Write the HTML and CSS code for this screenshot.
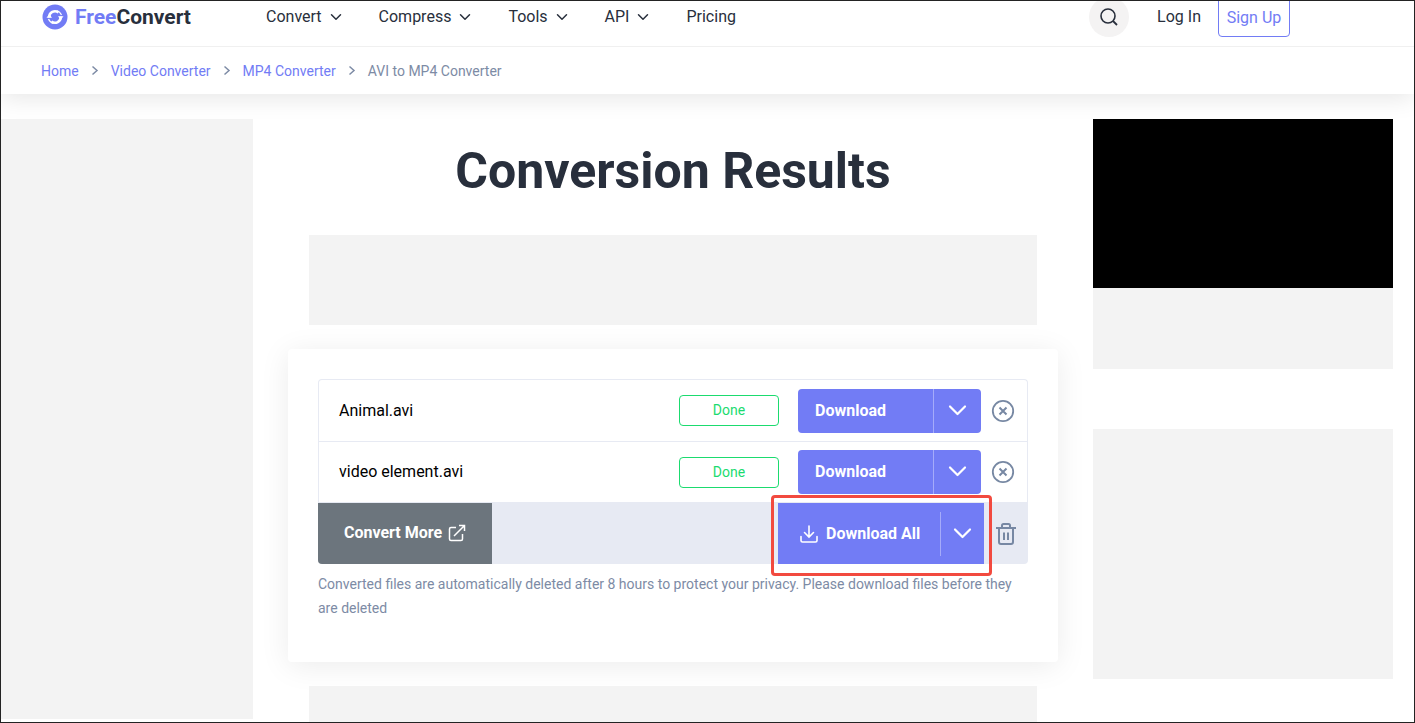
FILE: index.html
```html
<!DOCTYPE html>
<html lang="en">
<head>
  <meta charset="UTF-8">
  <meta name="viewport" content="width=device-width, initial-scale=1.0">
  <title>Conversion Results - FreeConvert</title>
  <link rel="stylesheet" href="styles.css">
</head>
<body>
<svg class="sprite" width="0" height="0" aria-hidden="true">
  <symbol id="chevron" viewBox="0 0 12 8"><path d="M1.5 1.8 L6 6.300 L10.500 1.8" fill="none" stroke="currentColor" stroke-width="1.5" stroke-linecap="round" stroke-linejoin="round"/></symbol>
  <symbol id="chevron-big" viewBox="0 0 20 12"><path d="M2 2.500 L9.500 10 L17 2.500" fill="none" stroke="currentColor" stroke-width="2.2" stroke-linecap="round" stroke-linejoin="round"/></symbol>
  <symbol id="crumb" viewBox="0 0 8 12"><path d="M1.5 1.5 L6 5.500 L1.5 9.500" fill="none" stroke="currentColor" stroke-width="1.5"/></symbol>
  <symbol id="remove" viewBox="0 0 24 24"><circle cx="12" cy="12" r="10.2" fill="none" stroke="currentColor" stroke-width="1.8"/><path d="M8.5 8.5 L15.5 15.5 M15.5 8.5 L8.5 15.5" stroke="currentColor" stroke-width="2"/></symbol>
</svg>

<header class="header">
  <a class="logo" href="#">
    <svg width="26" height="26" viewBox="0 0 26 26" aria-hidden="true">
      <circle cx="13" cy="13" r="12.5" fill="#727cf5"/>
      <path d="M7.300 13.500 A5.700 5.700 0 0 1 16.500 8.500 M18.700 12.500 A5.700 5.700 0 0 1 9.500 17.500" fill="none" stroke="#fff" stroke-width="2.5"/>
      <path d="M4.500 13.800 L7.300 10 L10 13.800 Z M21.500 12.200 L18.700 16 L16 12.200 Z" fill="#fff"/>
      <path d="M14.500 6.500 Q18 7.500 19.500 11 M11.500 19.500 Q8 18.500 6.500 15" fill="none" stroke="#fff" stroke-width="1.2"/>
    </svg>
    <span class="logo-text"><span class="logo-free">Free</span>Convert</span>
  </a>
  <nav class="nav">
    <a href="#">Convert <svg width="12" height="8"><use href="#chevron"/></svg></a>
    <a href="#">Compress <svg width="12" height="8"><use href="#chevron"/></svg></a>
    <a href="#">Tools <svg width="12" height="8"><use href="#chevron"/></svg></a>
    <a href="#">API <svg width="12" height="8"><use href="#chevron"/></svg></a>
    <a href="#">Pricing</a>
  </nav>
  <div class="account">
    <button class="search" aria-label="Search">
      <svg width="20" height="20" viewBox="0 0 20 20"><circle cx="9" cy="9" r="7" fill="none" stroke="#282f3c" stroke-width="1.6"/><path d="M14 14 L18 18" stroke="#282f3c" stroke-width="1.8"/></svg>
    </button>
    <a class="login" href="#">Log In</a>
    <a class="signup" href="#">Sign Up</a>
  </div>
</header>

<nav class="breadcrumb" aria-label="Breadcrumb">
  <a href="#">Home</a>
  <svg width="8" height="12"><use href="#crumb"/></svg>
  <a href="#">Video Converter</a>
  <svg width="8" height="12"><use href="#crumb"/></svg>
  <a href="#">MP4 Converter</a>
  <svg width="8" height="12"><use href="#crumb"/></svg>
  <span>AVI to MP4 Converter</span>
</nav>

<div class="layout">
  <aside class="ad ad-left"></aside>

  <main class="content">
    <h1>Conversion Results</h1>
    <div class="ad ad-banner"></div>

    <section class="card">
      <ul class="files">
        <li class="file">
          <span class="file-name">Animal.avi</span>
          <span class="status">Done</span>
          <div class="download">
            <button class="download-main">Download</button>
            <button class="download-more" aria-label="Download options"><svg width="20" height="12"><use href="#chevron-big"/></svg></button>
          </div>
          <button class="icon-button" aria-label="Remove"><svg width="24" height="24"><use href="#remove"/></svg></button>
        </li>
        <li class="file">
          <span class="file-name">video element.avi</span>
          <span class="status">Done</span>
          <div class="download">
            <button class="download-main">Download</button>
            <button class="download-more" aria-label="Download options"><svg width="20" height="12"><use href="#chevron-big"/></svg></button>
          </div>
          <button class="icon-button" aria-label="Remove"><svg width="24" height="24"><use href="#remove"/></svg></button>
        </li>
      </ul>
      <div class="actions">
        <button class="convert-more">Convert More
          <svg width="18" height="18" viewBox="0 0 18 18" fill="none" stroke="#fff" stroke-width="1.5"><path d="M8 3.500 H3 Q1.500 3.500 1.500 5 V15 Q1.500 16.500 3 16.500 H13 Q14.500 16.500 14.500 15 V10 M6 12 L16.500 1.500 M11 1.500 H16.500 V7"/></svg>
        </button>
        <div class="download-all">
          <button class="download-all-main">
            <svg width="18" height="18" viewBox="0 0 18 18" fill="none" stroke="#fff" stroke-width="1.6" stroke-linecap="round"><path d="M9 1 V11.500 M4.500 7.500 L9 12 L13.500 7.500 M1 11.500 V15.500 Q1 17 2.500 17 H15.500 Q17 17 17 15.500 V11.500"/></svg>
            Download All
          </button>
          <button class="download-all-more" aria-label="Download all options"><svg width="20" height="12"><use href="#chevron-big"/></svg></button>
        </div>
        <button class="icon-button" aria-label="Delete all">
          <svg width="20" height="24" viewBox="0 0 20 24" fill="none" stroke="currentColor" stroke-width="2"><path d="M0 6 H20 M6 6 V3.500 Q6 2 7.500 2 H12.500 Q14 2 14 3.500 V6 M3 6 V20 Q3 22 5 22 H15 Q17 22 17 20 V6 M8 10.500 V18 M12 10.500 V18"/></svg>
        </button>
      </div>
      <p class="note">Converted files are automatically deleted after 8 hours to protect your privacy. Please download files before they are deleted</p>
    </section>

    <div class="ad ad-banner"></div>
  </main>

  <aside class="sidebar">
    <div class="ad ad-video"><div class="video"></div></div>
    <div class="ad ad-box"></div>
  </aside>
</div>
</body>
</html>
```
FILE: styles.css
```css
* {
  box-sizing: border-box;
}

body {
  margin: 0;
  height: 100vh;
  overflow: hidden;
  border: 1px solid #232323;
  background: #fff;
  color: #282f3c;
  font: 16px/24px Roboto, "Liberation Sans", sans-serif;
}

a {
  color: inherit;
  text-decoration: none;
}

button {
  padding: 0;
  border: 0;
  background: none;
  color: inherit;
  font: inherit;
  cursor: pointer;
}

.sprite {
  position: absolute;
}

/* header */
.header {
  position: relative;
  z-index: 1;
  display: flex;
  align-items: center;
  height: 46px;
  padding: 0 124px 13px 41px;
  overflow: hidden;
  border-bottom: 1px solid #f0f0f0;
  background: #fff;
}

.logo {
  display: flex;
  align-items: center;
  gap: 7px;
  width: 224px;
  font-size: 21px;
  font-weight: 700;
}

.logo-free {
  color: #727cf5;
}

.nav {
  display: flex;
  gap: 37px;
}

.nav a {
  display: flex;
  align-items: center;
  gap: 8px;
}

.account {
  display: flex;
  align-items: center;
  margin-left: auto;
}

.search {
  display: flex;
  align-items: center;
  justify-content: center;
  width: 40px;
  height: 40px;
  border-radius: 50%;
  background: #f4f3f3;
}

.login {
  margin: 0 17px 0 28px;
}

.signup {
  width: 72px;
  height: 40px;
  border: 1px solid #727cf5;
  border-radius: 4px;
  color: #727cf5;
  line-height: 40px;
  text-align: center;
}

.breadcrumb {
  display: flex;
  align-items: center;
  gap: 12px;
  height: 47px;
  padding-left: 40px;
  box-shadow: 0 4px 24px rgba(0, 0, 0, 0.1);
  color: #7d8ba5;
  font-size: 14px;
}

.breadcrumb a {
  color: #727cf5;
}

/* page columns */
.layout {
  display: flex;
  align-items: flex-start;
  padding: 25px 21px 0 0;
}

.ad {
  background: #f3f3f3;
}

.ad-left {
  width: 252px;
  height: 600px;
}

.content {
  display: flex;
  flex: 1;
  flex-direction: column;
  align-items: center;
  gap: 24px;
}

h1 {
  margin: 22px 0 10px;
  font-size: 50px;
  font-weight: 700;
  line-height: 60px;
}

.ad-banner {
  width: 728px;
  height: 90px;
}

.sidebar {
  width: 300px;
}

.ad-video {
  height: 250px;
  margin-bottom: 60px;
}

.video {
  height: 169px;
  background: #000;
}

.ad-box {
  height: 250px;
}

/* results card */
.card {
  width: 770px;
  padding: 30px 30px 42px;
  border-radius: 4px;
  box-shadow: 0 4px 30px rgba(0, 0, 0, 0.08);
}

.files {
  margin: 0;
  padding: 0;
  border: 1px solid #e7eaf3;
  border-bottom: 0;
  border-radius: 4px 4px 0 0;
  list-style: none;
}

.file {
  display: flex;
  align-items: center;
  height: 62px;
  padding: 0 12px 0 20px;
  border-bottom: 1px solid #e7eaf3;
}

.file + .file {
  height: 61px;
}

.file-name {
  flex: 1;
  color: #000;
}

.status {
  width: 100px;
  height: 31px;
  margin-right: 19px;
  border: 1px solid #1bdb6f;
  border-radius: 4px;
  color: #1bdb6f;
  font-size: 14px;
  line-height: 28px;
  text-align: center;
}

.download {
  display: flex;
  width: 183px;
  height: 44px;
  margin-right: 10px;
  overflow: hidden;
  border-radius: 4px;
  background: #727cf5;
  color: #fff;
}

.download-main {
  flex: 1;
  padding-left: 17px;
  font-weight: 700;
  text-align: left;
}

.download-more {
  width: 48px;
  border-left: 1px solid #a5abfa;
}

.icon-button {
  display: flex;
  color: #7788a3;
}

.actions {
  display: flex;
  align-items: center;
  height: 61px;
  padding-right: 12px;
  border-radius: 0 0 4px 4px;
  background: #e7eaf3;
}

.convert-more {
  display: flex;
  align-items: center;
  justify-content: center;
  gap: 6px;
  width: 174px;
  height: 61px;
  margin-right: auto;
  padding-bottom: 2px;
  border-radius: 0 0 0 4px;
  background: #6c757d;
  color: #fff;
  font-weight: 700;
}

.download-all {
  position: relative;
  display: flex;
  align-items: center;
  width: 206px;
  height: 61px;
  margin-right: 12px;
  background: #727cf5;
  color: #fff;
}

/* highlight frame over the button */
.download-all::after {
  content: "";
  position: absolute;
  inset: -8px -8px -12px -7px;
  border: 3px solid #f24a3f;
  border-radius: 4px;
  pointer-events: none;
}

.download-all-main {
  display: flex;
  flex: 1;
  align-items: center;
  gap: 8px;
  padding-left: 22px;
  font-weight: 700;
}

.download-all-more {
  width: 44px;
  height: 44px;
  border-left: 1px solid #a5abfa;
}

.note {
  margin: 8px 0 0;
  color: #7d8ba5;
  font-size: 14px;
}
```
